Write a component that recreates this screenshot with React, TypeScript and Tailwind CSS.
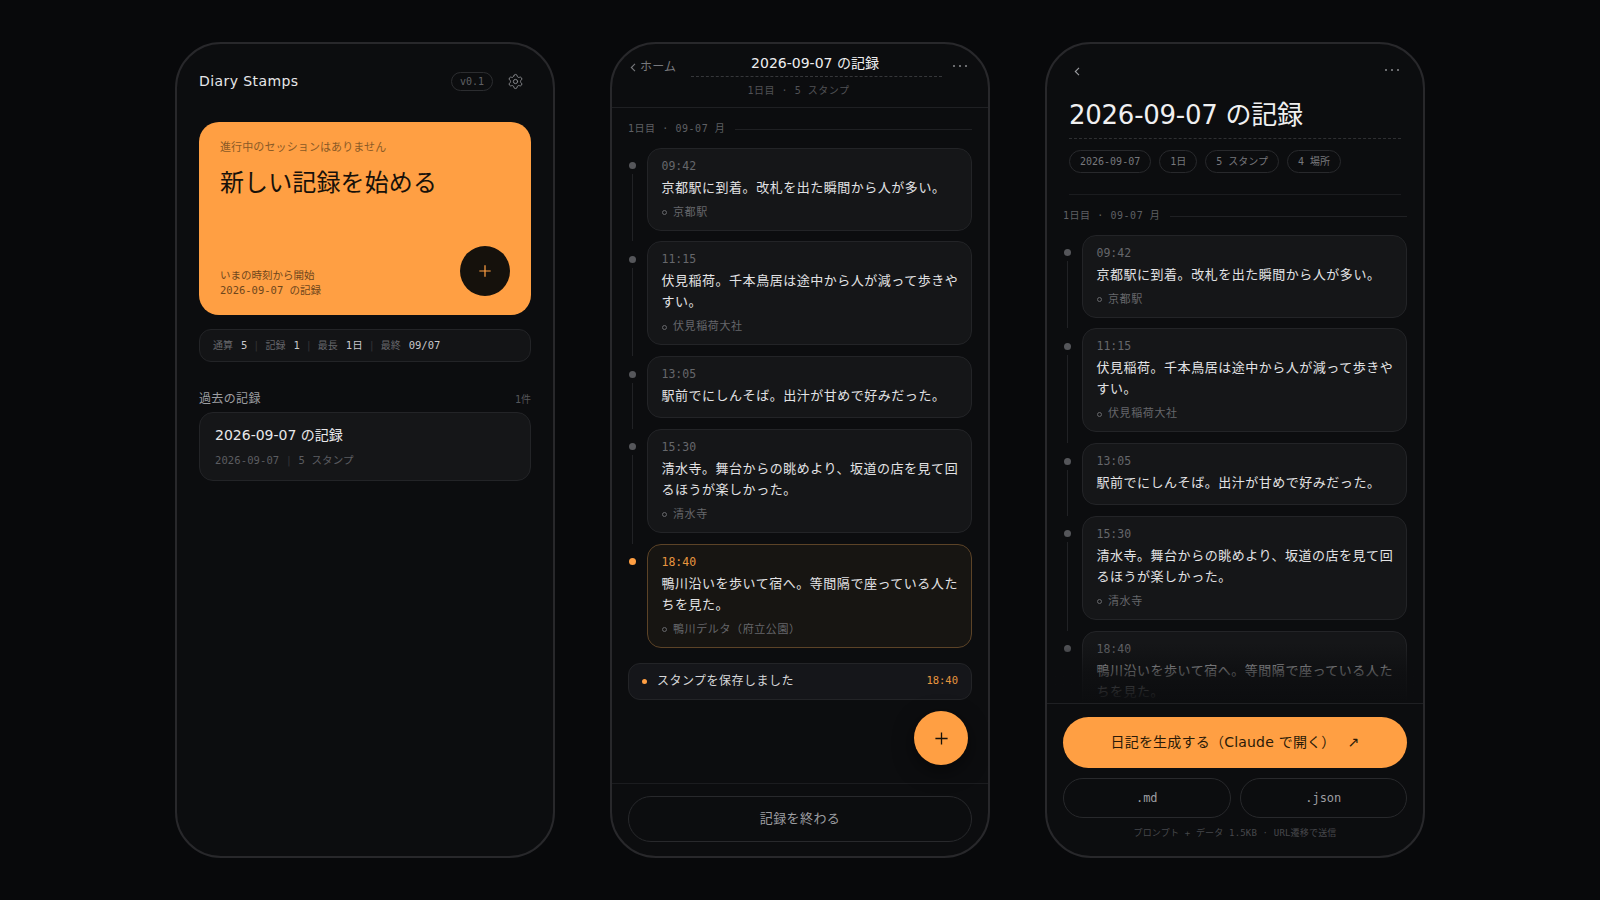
import { Settings } from "lucide-react";

const sans = "font-['DejaVu_Sans','Noto_Sans_CJK_JP',sans-serif]";
const mono = "font-['DejaVu_Sans_Mono','Noto_Sans_CJK_JP',monospace]";

const stamps = [
  { t: "09:42", b: "京都駅に到着。改札を出た瞬間から人が多い。", l: "京都駅" },
  { t: "11:15", b: "伏見稲荷。千本鳥居は途中から人が減って歩きやすい。", l: "伏見稲荷大社" },
  { t: "13:05", b: "駅前でにしんそば。出汁が甘めで好みだった。", l: "" },
  { t: "15:30", b: "清水寺。舞台からの眺めより、坂道の店を見て回るほうが楽しかった。", l: "清水寺" },
  { t: "18:40", b: "鴨川沿いを歩いて宿へ。等間隔で座っている人たちを見た。", l: "鴨川デルタ（府立公園）" },
];

function Phone({ children }: { children: React.ReactNode }) {
  return (
    <div className={`w-[380px] h-[816px] shrink-0 rounded-[46px] border-2 border-[#28282b] bg-[#0c0d0f] overflow-hidden flex flex-col ${sans}`}>
      {children}
    </div>
  );
}

function DayLabel() {
  return (
    <div className="flex items-center gap-[10px] h-[14px]">
      <span className={`${mono} text-[10px] leading-[14px] tracking-[0.055em] text-[#5f6064] whitespace-pre`}>1日目 · 09-07 月</span>
      <span className="flex-1 h-px bg-[#1f2023]" />
    </div>
  );
}

function Timeline({ active }: { active: boolean }) {
  return (
    <div className="mt-[11.5px] flex flex-col">
      {stamps.map((s, i) => {
        const on = active && i === 4;
        return (
          <div key={s.t} className="flex">
            <div className="w-[19px] shrink-0 flex flex-col items-start">
              <span className={`mt-[14.5px] ml-[1px] w-[7px] h-[7px] rounded-full ${on ? "bg-[#ff9f43]" : "bg-[#55565a]"}`} />
              {i < 4 && <span className="ml-[4px] mt-[5px] w-px flex-1 bg-[#212225]" />}
            </div>
            <div className={`flex-1 min-w-0 rounded-[14px] border ${i < 4 ? "mb-[10.75px]" : ""} pl-[13.5px] pr-[12px] pt-[10px] pb-[11px] ${on ? "border-[#5c4327] bg-[#171512]" : "border-[#232427] bg-[#151618]"}`}>
              <div className={`${mono} text-[11.5px] leading-[15px] ${on ? "text-[#e8963f]" : "text-[#66676b]"}`}>{s.t}</div>
              <div className="mt-[3px] text-[13px] leading-[21px] tracking-[0.04em] text-[#e2e2e4]">{s.b}</div>
              {s.l && (
                <div className="mt-[9px] flex items-center gap-[6.5px] text-[11px] leading-[12px] tracking-[0.055em] text-[#66676b]">
                  <span className="w-[5px] h-[5px] rounded-full border border-[#66676b]" />
                  {s.l}
                </div>
              )}
            </div>
          </div>
        );
      })}
    </div>
  );
}

function PlusIcon({ className, size }: { className: string; size: number }) {
  return (
    <svg width={size} height={size} viewBox="0 0 16 16" fill="none" stroke="currentColor" strokeWidth="1.4" className={className}>
      <path d="M8 1.5v13M1.5 8h13" />
    </svg>
  );
}

function Dots({ className }: { className?: string }) {
  return (
    <span className={`flex gap-[3.5px] ${className ?? ""}`}>
      <i className="w-[2.5px] h-[2.5px] rounded-full bg-[#8a8b8f]" />
      <i className="w-[2.5px] h-[2.5px] rounded-full bg-[#8a8b8f]" />
      <i className="w-[2.5px] h-[2.5px] rounded-full bg-[#8a8b8f]" />
    </span>
  );
}

function Chevron({ className }: { className?: string }) {
  return (
    <svg width="6" height="9" viewBox="0 0 6 9" fill="none" stroke="currentColor" strokeWidth="1.1" className={className}>
      <path d="M5 .8 1.3 4.5 5 8.2" />
    </svg>
  );
}

function Sep() {
  return <span className="mx-[6px] text-[#333438] font-normal">|</span>;
}

function Val({ children }: { children: React.ReactNode }) {
  return <b className="ml-[2px] font-normal text-[10.5px] text-[#c8c8cb]">{children}</b>;
}

function Home() {
  return (
    <Phone>
      <div className="px-[22px] flex-1 flex flex-col">
        <div className="mt-[25px] h-[24px] flex items-center">
          <span className="text-[14px] tracking-[0.03em] text-[#e6e6e8]">Diary Stamps</span>
          <span className={`ml-auto h-[19px] w-[42px] rounded-full border border-[#2c2d30] flex items-center justify-center ${mono} text-[10px] text-[#5f6064]`}>v0.1</span>
          <Settings size={17} strokeWidth={1.3} className="ml-[14px] mr-[7px] text-[#8d8e92]" />
        </div>
        <div className="mt-[29px] h-[193px] rounded-[20px] bg-[#ff9f43] pl-[21px] pr-[21px] pt-[19px] pb-[19px] flex flex-col">
          <div className="text-[11px] leading-[14px] tracking-[0.01em] text-[#8a5a26]">進行中のセッションはありません</div>
          <div className="mt-[12px] text-[24px] leading-[32px] tracking-[0.005em] text-[#17110a]">新しい記録を始める</div>
          <div className="mt-auto flex items-end justify-between">
            <div className="mb-[-2px] text-[#6e461c]">
              <div className="text-[10.5px] leading-[15px]">いまの時刻から開始</div>
              <div className={`${mono} text-[10.5px] leading-[15px]`}>2026-09-07 の記録</div>
            </div>
            <div className="w-[50px] h-[50px] rounded-full bg-[#15110c] flex items-center justify-center">
              <PlusIcon size={14} className="text-[#ff9f43]" />
            </div>
          </div>
        </div>
        <div className={`mt-[14px] h-[33px] rounded-[12px] border border-[#232427] bg-[#131416] pl-[13px] flex items-center ${mono} text-[10px] whitespace-pre text-[#66676b]`}>
          通算 <Val>5</Val><Sep />記録 <Val>1</Val><Sep />最長 <Val>1日</Val><Sep />最終 <Val>09/07</Val>
        </div>
        <div className="mt-[29px] h-[16px] flex items-center justify-between">
          <span className="text-[12px] tracking-[0.03em] text-[#9c9da1]">過去の記録</span>
          <span className={`${mono} text-[10px] text-[#55565a]`}>1件</span>
        </div>
        <div className="mt-[5px] h-[69px] rounded-[14px] border border-[#232427] bg-[#151618] pl-[15px] pt-[12px]">
          <div className="text-[14px] leading-[20px] text-[#e8e8ea]">2026-09-07 の記録</div>
          <div className={`mt-[8px] ${mono} text-[10.5px] leading-[15px] tracking-[0.01em] text-[#5c5d61] whitespace-pre`}>2026-09-07 <span className="text-[#333438]">|</span> 5 スタンプ</div>
        </div>
      </div>
    </Phone>
  );
}

function Session() {
  return (
    <Phone>
      <div className="h-[64px] shrink-0 border-b border-[#1f2023] pl-[18px] pr-[21px]">
        <div className="h-[33px] flex items-end">
          <div className="w-[61px] h-[24px] flex items-center gap-[4px] text-[12px] tracking-[0.02em] text-[#77787c] mb-[-2px]">
            <Chevron className="text-[#77787c] mt-[1px]" />ホーム
          </div>
          <div className="w-[251px] h-[33px] pt-[8px] pr-[3px] text-center border-b border-dashed border-[#36373a] text-[14px] leading-[22px] text-[#eeeeef] shrink-0">2026-09-07 の記録</div>
          <Dots className="ml-auto mb-[10px]" />
        </div>
        <div className={`mt-[7px] text-center ${mono} text-[10px] leading-[14px] whitespace-pre tracking-[0.05em] text-[#515256]`}>1日目 · 5 スタンプ</div>
      </div>
      <div className="relative flex-1 min-h-0 px-[16px] pt-[14px]">
        <DayLabel />
        <Timeline active />
        <div className="mt-[15px] h-[37px] rounded-[12px] border border-[#232427] bg-[#15161a] pl-[13px] pr-[13px] flex items-center">
          <span className="w-[5px] h-[5px] rounded-full bg-[#ff9f43]" />
          <span className="ml-[10px] text-[12px] tracking-[0.04em] text-[#d6d6d8]">スタンプを保存しました</span>
          <span className={`ml-auto ${mono} text-[10.5px] text-[#e8963f]`}>18:40</span>
        </div>
        <button className="absolute right-[20px] bottom-[18px] w-[54px] h-[54px] rounded-full bg-[#ff9f43] shadow-[0_6px_20px_rgba(0,0,0,0.5)] flex items-center justify-center">
          <PlusIcon size={15} className="text-[#17110a]" />
        </button>
      </div>
      <div className="shrink-0 border-t border-[#1b1c1f] px-[16px] pt-[12px] pb-[14px]">
        <div className="h-[46px] rounded-full border border-[#28292c] flex items-center justify-center text-[13px] tracking-[0.03em] text-[#9c9da1]">記録を終わる</div>
      </div>
    </Phone>
  );
}

function Chip({ children }: { children: React.ReactNode }) {
  return (
    <span className={`h-[23px] px-[10px] rounded-full border border-[#28292c] flex items-center ${mono} text-[10px] text-[#77787c]`}>{children}</span>
  );
}

function Review() {
  return (
    <Phone>
      <div className="relative flex-1 min-h-0 overflow-hidden">
        <div className="px-[16px]">
          <div className="px-[6px]">
            <div className="mt-[19px] h-[16px] flex items-center justify-between pl-[5px] pr-[2px]">
              <Chevron className="text-[#9c9da1]" />
              <Dots className="mb-[2px]" />
            </div>
            <div className="mt-[19px] h-[35px] text-[26px] leading-[35px] tracking-[-0.01em] text-[#f0f0f1]">2026-09-07 の記録</div>
            <div className="mt-[5px] border-t border-dashed border-[#2e2f32]" />
            <div className="mt-[11px] flex gap-[8px]">
              <Chip>2026-09-07</Chip>
              <Chip>1日</Chip>
              <Chip>5 スタンプ</Chip>
              <Chip>4 場所</Chip>
            </div>
            <div className="mt-[21px] border-t border-[#1b1c1f]" />
          </div>
          <div className="mt-[14px]">
            <DayLabel />
          </div>
          <Timeline active={false} />
        </div>
        <div className="absolute left-0 right-0 bottom-0 h-[60px] bg-gradient-to-b from-[#0c0d0f00] via-[#0c0d0fb0] to-[#0c0d0f]" />
      </div>
      <div className="shrink-0 border-t border-[#1f2023] px-[16px] pt-[13px] pb-[17px]">
        <div className="h-[51px] rounded-full bg-[#ff9f43] flex items-center justify-center text-[14px] tracking-[0.015em] text-[#2a1a08]">
          日記を生成する（Claude で開く）<span className="ml-[12px]">↗</span>
        </div>
        <div className="mt-[10px] flex gap-[9px]">
          <div className={`flex-1 h-[40px] rounded-full border border-[#28292c] flex items-center justify-center ${mono} text-[12px] text-[#9c9da1]`}>.md</div>
          <div className={`flex-1 h-[40px] rounded-full border border-[#28292c] flex items-center justify-center ${mono} text-[12px] text-[#9c9da1]`}>.json</div>
        </div>
        <div className={`mt-[9px] text-center ${mono} text-[9px] leading-[12px] tracking-[0.02em] whitespace-pre text-[#47484c]`}>プロンプト + データ 1.5KB · URL遷移で送信</div>
      </div>
    </Phone>
  );
}

export default function App() {
  return (
    <div className="w-[1600px] h-[900px] bg-[#08090b] flex items-center justify-center gap-[55px] overflow-hidden">
      <Home />
      <Session />
      <Review />
    </div>
  );
}
